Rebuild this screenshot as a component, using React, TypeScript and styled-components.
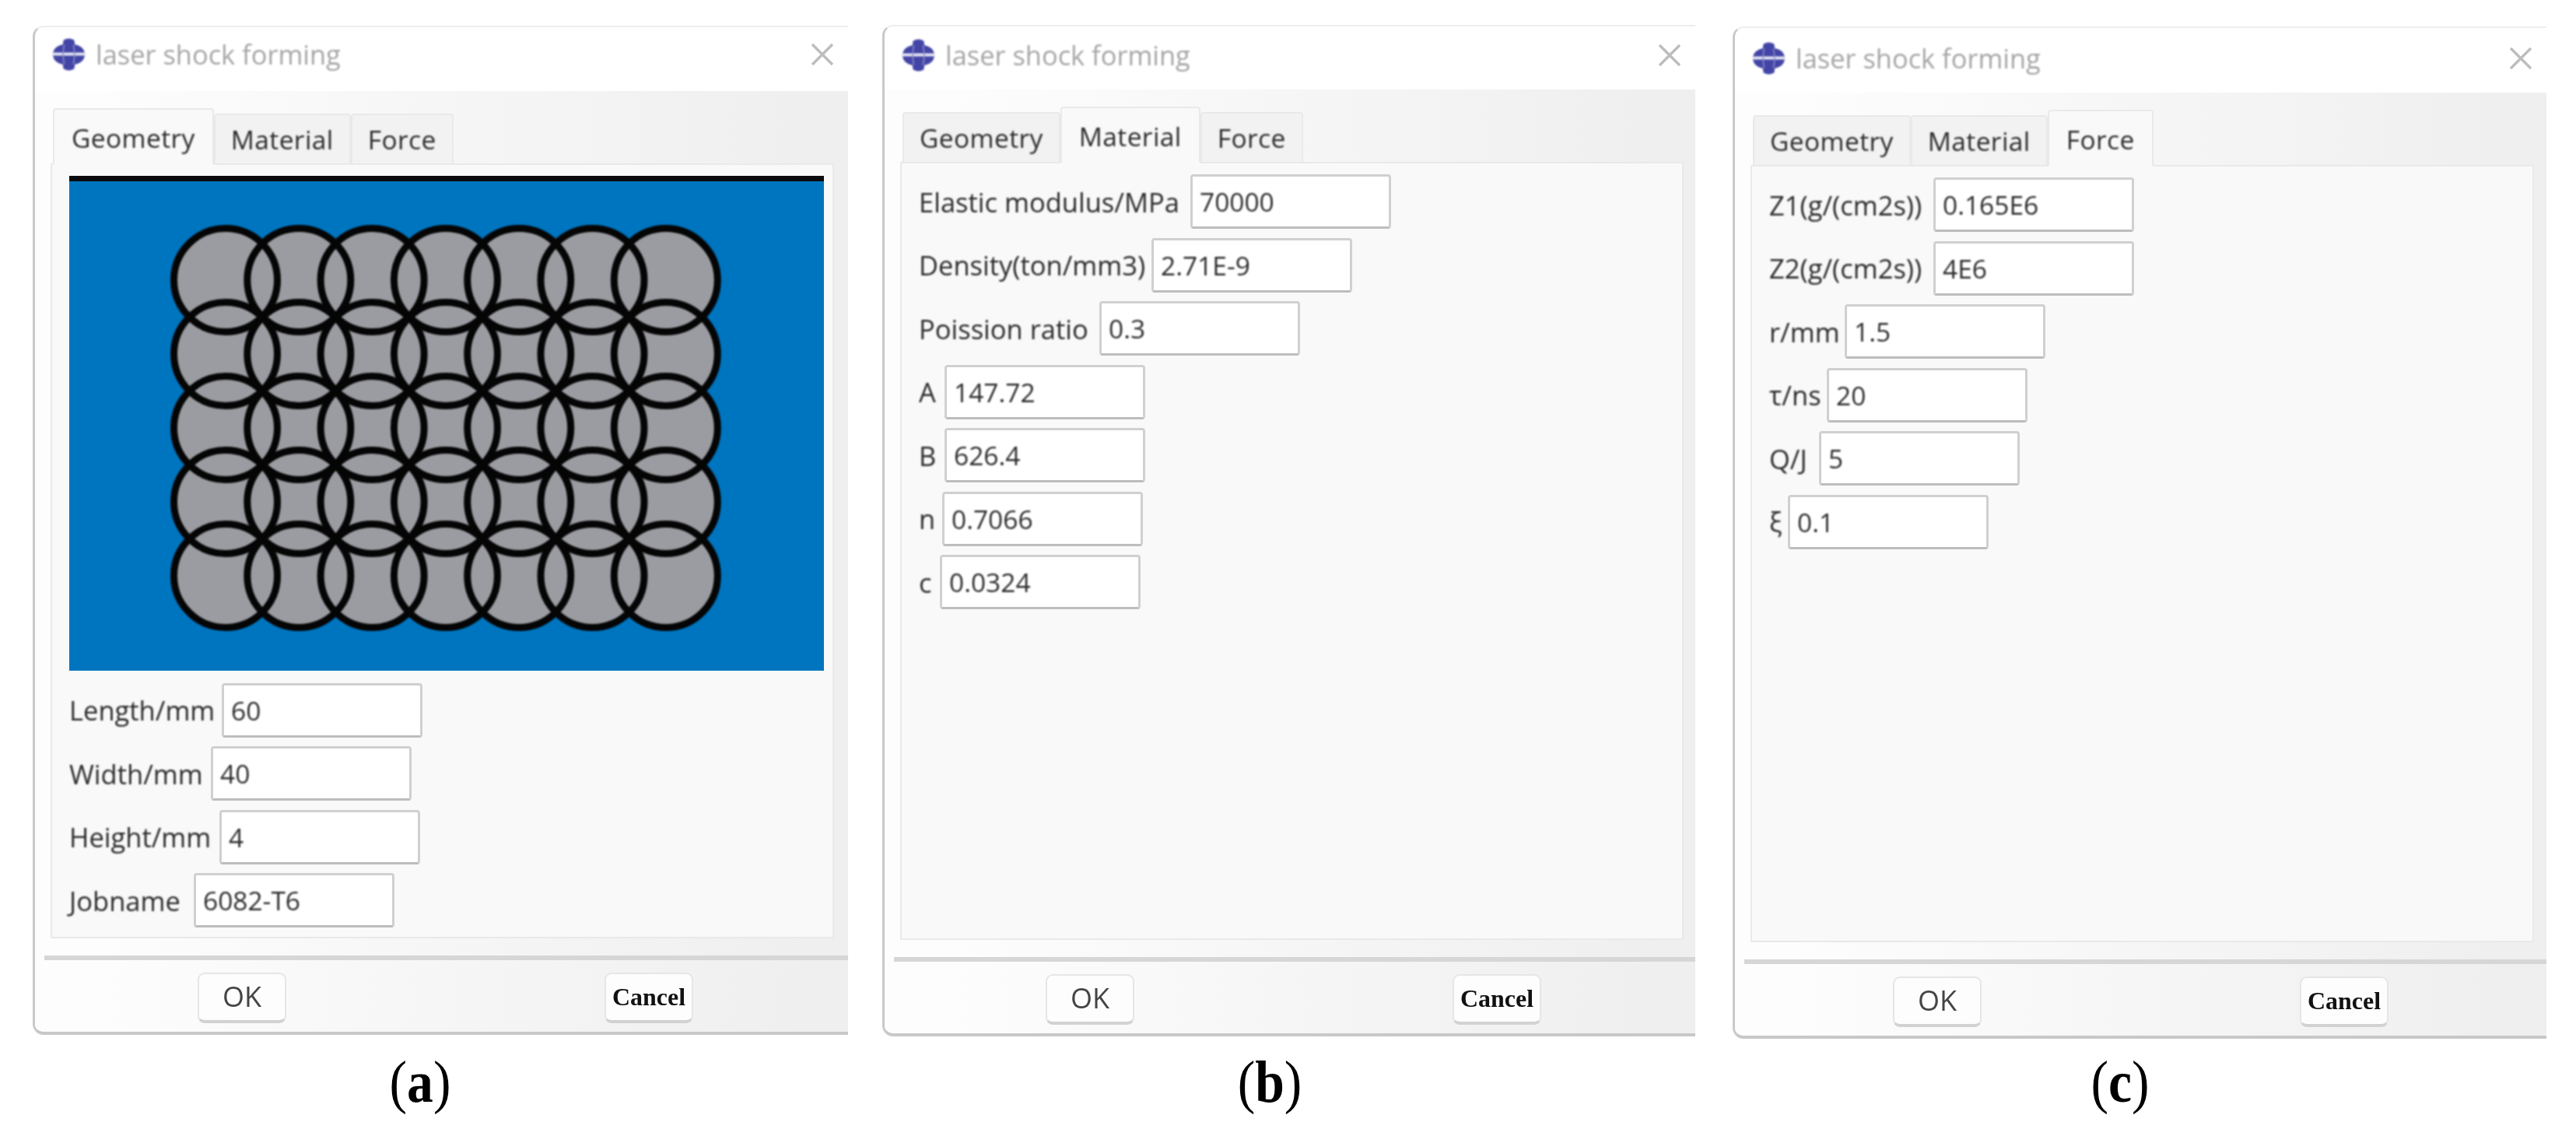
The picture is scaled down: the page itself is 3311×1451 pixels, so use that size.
import React from 'react'
import styled, { createGlobalStyle } from 'styled-components'

const uiFont = `"Open Sans", "Noto Sans", "Liberation Sans", sans-serif`

const GlobalStyle = createGlobalStyle`
  html, body {
    margin: 0;
    background: #fff;
  }

  body {
    font-family: ${uiFont};
    color: #2b2b2b;
  }
`

const Page = styled.div`
  display: flex;
  width: 3311px;
  height: 1451px;
  overflow: hidden;
  background: #fff;
`

const Figure = styled.div<{ $top: number; $left: number }>`
  display: flex;
  flex-direction: column;
  flex: none;
  height: ${p => 1451 - p.$top}px;
  margin: ${p => p.$top}px 0 0 ${p => p.$left}px;
`

const Dialog = styled.div<{ $width: number; $height: number }>`
  display: flex;
  flex-direction: column;
  flex: none;
  box-sizing: border-box;
  width: ${p => p.$width}px;
  height: ${p => p.$height}px;
  background: #fff;
  border-left: 3px solid #c9c9c9;
  border-top: 2px solid #eeeeee;
  border-bottom: 4px solid #c8c8c8;
  border-radius: 14px 0 0 14px;
  overflow: hidden;
`

const TitleBar = styled.div<{ $height: number; $drop: number }>`
  display: flex;
  align-items: center;
  flex: none;
  box-sizing: border-box;
  height: ${p => p.$height}px;
  padding: 0 18px ${p => p.$drop}px 22px;
`

const AppIcon = styled.svg`
  width: 43px;
  height: 44px;
  flex: none;
  filter: blur(0.8px);
`

const TitleText = styled.div`
  margin-left: 13px;
  font-size: 34.4px;
  line-height: 44px;
  color: #a6a6a6;
  filter: blur(0.9px);
`

const CloseIcon = styled.svg`
  width: 30px;
  height: 30px;
  margin-left: auto;
  flex: none;
  filter: blur(0.7px);
`

const Body = styled.div`
  display: flex;
  flex-direction: column;
  flex: 1;
  min-height: 0;
  padding-top: 22px;
  background: linear-gradient(90deg, #fdfdfd 8%, #f6f6f6 50%, #efefef 95%);
`

const TabBar = styled.div`
  display: flex;
  align-items: flex-end;
  flex: none;
  height: 73px;
  margin: 0 0 -2px 23px;
  position: relative;
  z-index: 1;
`

const Tab = styled.div<{ $active?: boolean }>`
  box-sizing: border-box;
  height: ${p => (p.$active ? 73 : 66)}px;
  padding: ${p => (p.$active ? '13px 22px 0' : '8px 20px 0')};
  font-size: 33.5px;
  letter-spacing: 0.4px;
  line-height: 46px;
  color: #2b2b2b;
  background: ${p => (p.$active ? '#f9f9f9' : '#f2f2f2')};
  border: 2px solid #e9e9e9;
  border-bottom: ${p => (p.$active ? '2px solid #f9f9f9' : '2px solid #e9e9e9')};
  border-radius: 4px 4px 0 0;
`

const TabLabel = styled.span`
  filter: blur(0.8px);
  display: inline-block;
`

const Panel = styled.div`
  display: flex;
  flex-direction: column;
  gap: 11.5px;
  flex: 1;
  box-sizing: border-box;
  width: 1007px;
  min-height: 0;
  margin-left: 20px;
  padding: 14px 0 0 22px;
  background: #f9f9f9;
  border: 2px solid #e9e9e9;
`

const Viewport = styled.div`
  flex: none;
  width: 970px;
  height: 636px;
  margin-bottom: 4px;
  box-sizing: border-box;
  background: #0075bf;
  border-top: 7px solid #0b0b0d;
`

const ViewportArt = styled.svg`
  display: block;
  width: 970px;
  height: 629px;
  filter: blur(0.8px);
`

const Row = styled.div`
  display: flex;
  align-items: center;
  flex: none;
  height: 70px;
`

const Label = styled.div<{ $width: number }>`
  flex: none;
  width: ${p => p.$width}px;
  font-size: 34.5px;
  white-space: nowrap;
  color: #2b2b2b;
  filter: blur(0.8px);
`

const Field = styled.div`
  flex: none;
  box-sizing: border-box;
  width: 258px;
  height: 70px;
  padding: 0 9px;
  font-size: 33.5px;
  line-height: 64px;
  color: #2b2b2b;
  background: #fff;
  border: 3px solid #d0d0d0;
  border-bottom-color: #bdbdbd;
  border-radius: 4px;
`

const FieldText = styled.span`
  display: inline-block;
  filter: blur(0.8px);
`

const Footer = styled.div`
  flex: none;
  margin-top: 22px;
`

const Divider = styled.div`
  height: 6px;
  margin-left: 12px;
  background: #d6d6d6;
`

const ButtonRow = styled.div<{ $left: number }>`
  display: flex;
  gap: 409px;
  padding: 16px 0 11px ${p => p.$left}px;
`

const Button = styled.div<{ $serif?: boolean }>`
  flex: none;
  box-sizing: border-box;
  width: 114px;
  height: 65px;
  text-align: center;
  font-family: ${p => (p.$serif ? `"Liberation Serif", serif` : uiFont)};
  font-weight: ${p => (p.$serif ? 700 : 400)};
  font-size: ${p => (p.$serif ? 32 : 36)}px;
  line-height: 58px;
  color: ${p => (p.$serif ? '#111' : '#444')};
  background: #fdfdfd;
  border: 2px solid #e6e6e6;
  border-bottom: 4px solid #d2d2d2;
  border-radius: 9px;
`

const ButtonText = styled.span`
  display: inline-block;
  filter: blur(0.7px);
`

const Caption = styled.div`
  width: 996px;
  margin: auto 0 23px;
  text-align: center;
  font-family: "Liberation Serif", "Times New Roman", serif;
  font-size: 76px;
  line-height: 76px;
  color: #000;
  transform: scaleX(0.89);

  & > b {
    font-weight: 700;
  }
`

const STEP_X = 94.3
const STEP_Y = 95
const RADIUS = 66.5
const ORIGIN_X = 201
const ORIGIN_Y = 127

const centres: { x: number; y: number }[] = []
for (let r = 0; r < 5; r++) {
  for (let c = 0; c < 7; c++) {
    centres.push({ x: ORIGIN_X + c * STEP_X, y: ORIGIN_Y + r * STEP_Y })
  }
}

const Spots = () => (
  <ViewportArt viewBox="0 0 970 629">
    {centres.map(s => (
      <circle key={`f${s.x}-${s.y}`} cx={s.x} cy={s.y} r={RADIUS} fill="#9a9ca1" />
    ))}
    {centres.map(s => (
      <circle key={`s${s.x}-${s.y}`} cx={s.x} cy={s.y} r={RADIUS} fill="none" stroke="#050505" strokeWidth={9} />
    ))}
  </ViewportArt>
)

const Logo = () => (
  <AppIcon viewBox="0 0 44 44">
    <path
      d="M15 3 Q22 -1 29 3 L30 9 Q37 10 41 15 Q45 22 41 29 Q37 34 30 35 L29 41 Q22 45 15 41 L14 35 Q7 34 3 29 Q-1 22 3 15 Q7 10 14 9 Z"
      fill="#4345a6"
    />
    <rect x="0" y="19.5" width="44" height="4" fill="#e6e6f2" />
    <path d="M16 9 Q13 22 16 35 M28 9 Q31 22 28 35" stroke="#8c8ec9" strokeWidth="1.5" fill="none" />
  </AppIcon>
)

const Close = () => (
  <CloseIcon viewBox="0 0 30 30">
    <path d="M2 2 L28 28 M28 2 L2 28" stroke="#bdbdbd" strokeWidth="3.4" fill="none" />
  </CloseIcon>
)

interface FieldSpec {
  label: string
  value: string
  width: number
}

const geometryFields: FieldSpec[] = [
  { label: 'Length/mm', value: '60', width: 196 },
  { label: 'Width/mm', value: '40', width: 182 },
  { label: 'Height/mm', value: '4', width: 193 },
  { label: 'Jobname', value: '6082-T6', width: 160 },
]

const materialFields: FieldSpec[] = [
  { label: 'Elastic modulus/MPa', value: '70000', width: 349 },
  { label: 'Density(ton/mm3)', value: '2.71E-9', width: 299 },
  { label: 'Poission ratio', value: '0.3', width: 232 },
  { label: 'A', value: '147.72', width: 33 },
  { label: 'B', value: '626.4', width: 33 },
  { label: 'n', value: '0.7066', width: 30 },
  { label: 'c', value: '0.0324', width: 27 },
]

const forceFields: FieldSpec[] = [
  { label: 'Z1(g/(cm2s))', value: '0.165E6', width: 211 },
  { label: 'Z2(g/(cm2s))', value: '4E6', width: 211 },
  { label: 'r/mm', value: '1.5', width: 97 },
  { label: 'τ/ns', value: '20', width: 74 },
  { label: 'Q/J', value: '5', width: 64 },
  { label: 'ξ', value: '0.1', width: 24 },
]

const Fields = ({ items }: { items: FieldSpec[] }) => (
  <>
    {items.map(f => (
      <Row key={f.label}>
        <Label $width={f.width}>{f.label}</Label>
        <Field>
          <FieldText>{f.value}</FieldText>
        </Field>
      </Row>
    ))}
  </>
)

interface ShockDialogProps {
  active: string
  top: number
  left: number
  width: number
  height: number
  titleHeight: number
  titleDrop: number
  buttonsLeft: number
  tag: string
  children: React.ReactNode
}

const ShockDialog: React.FC<ShockDialogProps> = props => {
  const { active, top, left, width, height, titleHeight, titleDrop, buttonsLeft, tag, children } = props

  return (
    <Figure $top={top} $left={left}>
      <Dialog $width={width} $height={height}>
        <TitleBar $height={titleHeight} $drop={titleDrop}>
          <Logo />
          <TitleText>laser shock forming</TitleText>
          <Close />
        </TitleBar>
        <Body>
          <TabBar>
            {['Geometry', 'Material', 'Force'].map(name => (
              <Tab key={name} $active={name === active}>
                <TabLabel>{name}</TabLabel>
              </Tab>
            ))}
          </TabBar>
          <Panel>{children}</Panel>
          <Footer>
            <Divider />
            <ButtonRow $left={buttonsLeft}>
              <Button>
                <ButtonText>OK</ButtonText>
              </Button>
              <Button $serif>
                <ButtonText>Cancel</ButtonText>
              </Button>
            </ButtonRow>
          </Footer>
        </Body>
      </Dialog>
      <Caption>
        (<b>{tag}</b>)
      </Caption>
    </Figure>
  )
}

export default function App() {
  return (
    <Page>
      <GlobalStyle />
      <ShockDialog active="Geometry" top={33} left={42} width={1048} height={1297} titleHeight={82} titleDrop={12} buttonsLeft={209} tag="a">
        <Viewport>
          <Spots />
        </Viewport>
        <Fields items={geometryFields} />
      </ShockDialog>
      <ShockDialog active="Material" top={32} left={44} width={1045} height={1300} titleHeight={81} titleDrop={8} buttonsLeft={207} tag="b">
        <Fields items={materialFields} />
      </ShockDialog>
      <ShockDialog active="Force" top={34} left={48} width={1046} height={1301} titleHeight={83} titleDrop={5} buttonsLeft={203} tag="c">
        <Fields items={forceFields} />
      </ShockDialog>
    </Page>
  )
}
